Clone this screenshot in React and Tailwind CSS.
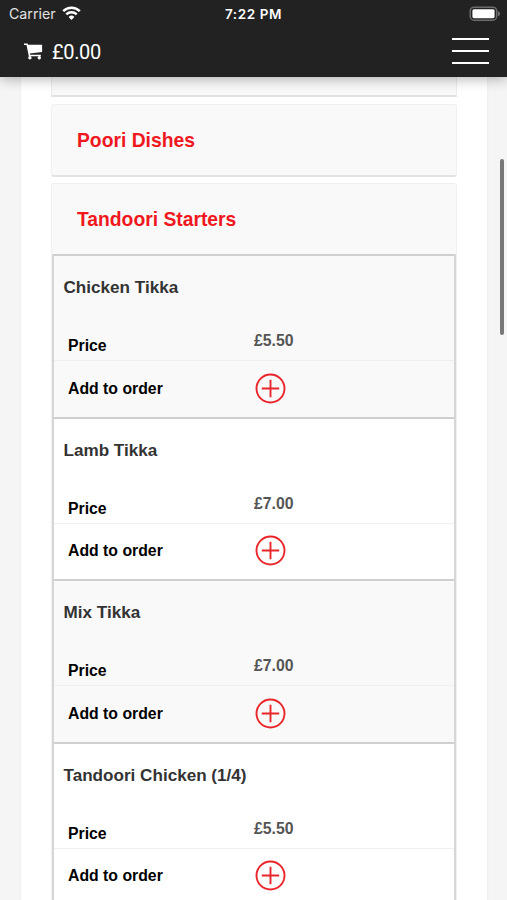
const items = [
  { name: "Chicken Tikka", price: "£5.50" },
  { name: "Lamb Tikka", price: "£7.00" },
  { name: "Mix Tikka", price: "£7.00" },
  { name: "Tandoori Chicken (1/4)", price: "£5.50" },
];

const WifiIcon = () => (
  <svg width="19" height="14" viewBox="0 0 19 14" className="ml-[6px] -mt-[2px]" fill="none">
    <path d="M1.2 5.1a11.8 11.8 0 0 1 16.6 0" stroke="#fff" strokeWidth="2.6" />
    <path d="M4.3 8.4a7.4 7.4 0 0 1 10.4 0" stroke="#fff" strokeWidth="2.4" />
    <path d="M6.6 10.9a4.1 4.1 0 0 1 5.8 0L9.5 14z" fill="#fff" />
  </svg>
);

const BatteryIcon = () => (
  <svg width="32" height="16" viewBox="0 0 32 16" className="-mt-[1px]">
    <rect x="1.2" y="1.2" width="26.5" height="13" rx="4" fill="#222" stroke="#6c6c6c" strokeWidth="1.5" />
    <rect x="3.4" y="3.2" width="22.2" height="9" rx="1.6" fill="#fff" />
    <path d="M28.8 5v5.4q2.4-1 2.4-2.7T28.8 5z" fill="#6c6c6c" />
  </svg>
);

const CartIcon = () => (
  <svg width="19" height="17" viewBox="0 0 19 17" fill="#fff">
    <path d="M0 .4h3.6l.5 1.4h14v7.3L5.8 10.6l.3 1.2h10.7v1.5H4.8L2.5 2H0z" />
    <circle cx="5.9" cy="14.7" r="1.7" />
    <circle cx="15.3" cy="14.7" r="1.7" />
  </svg>
);

const AddButton = () => (
  <button type="button" aria-label="Add to order" className="block">
    <svg width="31" height="31" viewBox="0 0 31 31" fill="none" stroke="#e9262b" strokeWidth="1.9">
      <circle cx="15.5" cy="15.5" r="14" />
      <path d="M15.5 6.8v17.4M6.8 15.5h17.4" />
    </svg>
  </button>
);

const Header = () => (
  <header className="relative z-10 h-[76.5px] shrink-0 bg-[#222] text-white shadow-[0_2px_12px_rgba(0,0,0,0.3)]">
    <div className="grid h-7 grid-cols-3 items-center pl-[9px] pr-[6px] font-['Inter',sans-serif]">
      <div className="flex items-center text-[#e2e2e2]">
        <span className="text-[14.2px]">Carrier</span>
        <WifiIcon />
      </div>
      <span className="-ml-[3px] text-center text-[13.5px] font-semibold tracking-[0.6px]">7:22 PM</span>
      <div className="flex justify-end">
        <BatteryIcon />
      </div>
    </div>
    <div className="flex h-[47px] items-center justify-between pl-6 pr-[18px]">
      <div className="flex items-center gap-[9px]">
        <CartIcon />
        <span className="font-['Roboto',sans-serif] text-[20px] leading-6 tracking-[-0.35px]">£0.00</span>
      </div>
      <button type="button" aria-label="Menu" className="flex w-[37px] flex-col gap-[10px] pb-[1px]">
        <span className="h-[2px] bg-white" />
        <span className="h-[2px] bg-white" />
        <span className="h-[2px] bg-white" />
      </button>
    </div>
  </header>
);

const CategoryTitle = ({ children }) => (
  <h2 className="flex h-[71px] items-center pl-[25px] pt-[1px] text-[19.3px] font-bold text-[#f01820]">{children}</h2>
);

const MenuItem = ({ name, price }) => (
  <li className="h-[162.5px] border-t-[2.5px] border-[#cfcfcf] odd:bg-[#f9f9f9] even:bg-white">
    <h3 className="h-[68px] pl-[9.5px] pt-[20px] text-[17.1px] font-bold leading-6 text-[#333]">{name}</h3>
    <div className="grid h-[37px] grid-cols-[186px_1fr] border-b border-[#efefef] pl-[14px] text-[15.8px] font-bold leading-5">
      <span className="pt-[12px] text-black">Price</span>
      <span className="pt-[7px] text-[#555]">{price}</span>
    </div>
    <div className="grid h-[54px] grid-cols-[187px_1fr] items-center pl-[14px] text-[15.8px] font-bold">
      <span className="text-black">Add to order</span>
      <AddButton />
    </div>
  </li>
);

const App = () => {
  return (
    <div className="relative flex h-[900px] w-[507px] flex-col overflow-hidden bg-[#f5f5f5] font-['Liberation_Sans',Arial,sans-serif]">
      <Header />
      <main className="ml-[21px] w-[466px] flex-1 bg-white px-[30px] shadow-[0_0_3px_rgba(0,0,0,0.06)]">
        <div className="h-[20px] border-x border-b-2 border-x-[#ececec] border-b-[#e2e2e2] bg-[#f8f8f8]" />
        <section className="mt-[7.5px] h-[72.5px] rounded-[3px] border border-b-2 border-[#f0f0f0] border-b-[#e2e2e2] bg-[#f9f9f9]">
          <CategoryTitle>Poori Dishes</CategoryTitle>
        </section>
        <section className="mt-[6.5px] rounded-t-[3px] border border-b-0 border-[#f0f0f0] bg-[#f9f9f9]">
          <CategoryTitle>Tandoori Starters</CategoryTitle>
          <ul className="-mt-[0.6px] border-x-2 border-[#d6d6d6]">
            {items.map((item) => (
              <MenuItem key={item.name} {...item} />
            ))}
          </ul>
        </section>
      </main>
      {/* scroll indicator */}
      <div className="absolute left-[499.5px] top-[159px] z-20 h-[176px] w-[4px] rounded-full bg-[#777]" />
    </div>
  );
};

export default App;
